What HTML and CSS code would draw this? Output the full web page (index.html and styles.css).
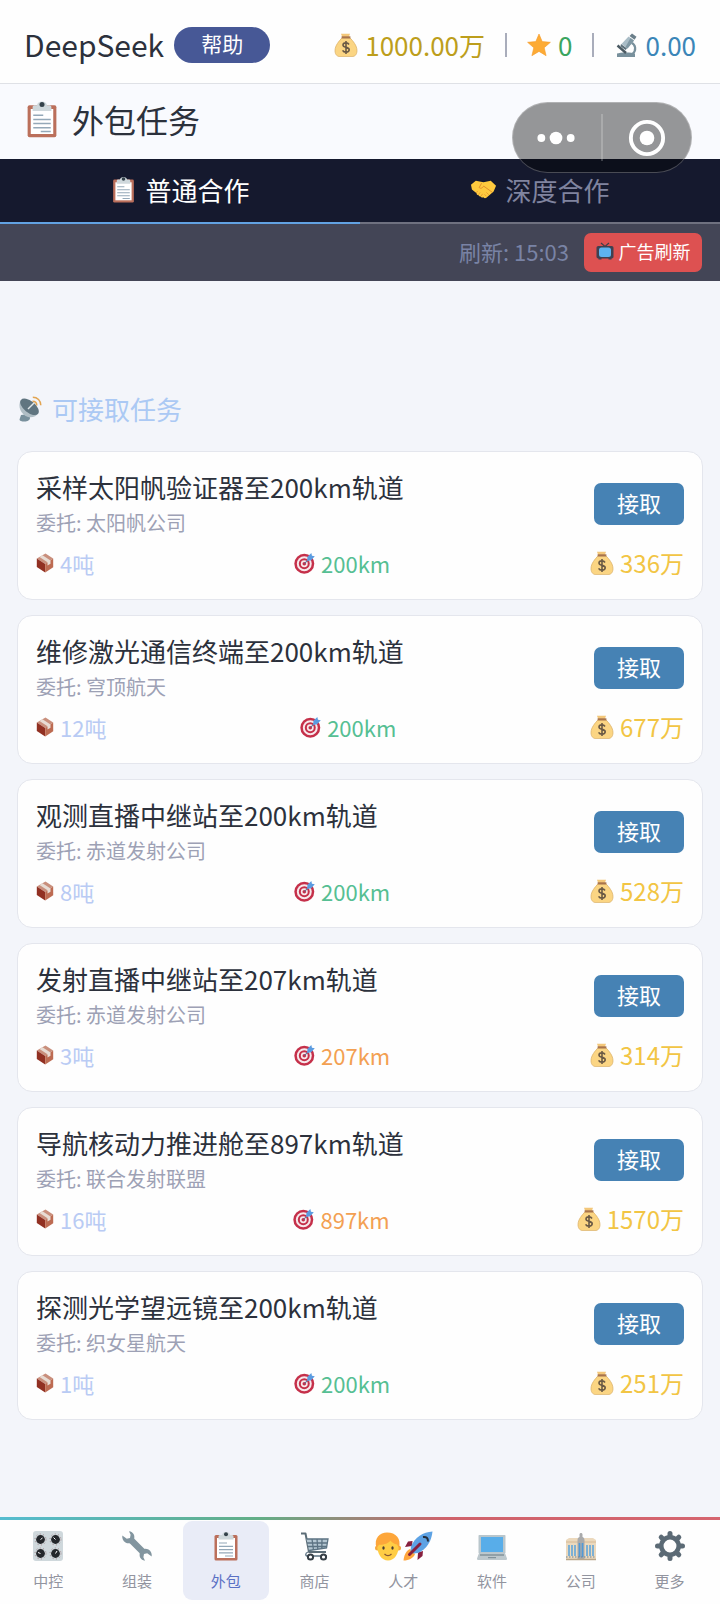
FILE: index.html
```html
<!DOCTYPE html>
<html lang="zh-CN">
<head>
    <meta charset="UTF-8">
    <meta name="viewport" content="width=device-width, initial-scale=1.0">
    <title>外包任务</title>
    <link rel="stylesheet" href="styles.css">
</head>
<body>
    <!-- icons -->
    <svg class="sprite" aria-hidden="true">
        <symbol id="i-money" viewBox="0 0 24 24">
            <path d="M7 .8h9l-1.6 4.4H8.6z" fill="#f3c77a"/>
            <path d="M8.3 4.6C5 8 1 12.600 1 17.600 1 22 3.500 23.600 6 23.600h12c2.500 0 5-1.600 5-6 0-5-4-9.600-7.300-13z" fill="#fbd583" stroke="#d9ae63" stroke-width=".7"/>
            <path d="M7.600 3.300h8.800v2.200H7.600z" fill="#a8744c"/>
            <path d="M15 11.500c-.7-1.200-1.800-1.600-3.100-1.600-1.700 0-2.900.8-2.900 2.200 0 3.300 6.200 1.300 6.200 4.700 0 1.500-1.300 2.300-3.200 2.300-1.500 0-2.700-.5-3.400-1.800M12 8v13" fill="none" stroke="#6b5a45" stroke-width="1.600"/>
        </symbol>
        <symbol id="i-star" viewBox="0 0 24 24">
            <path d="M12 1l3.200 7.600 8.200.7-6.200 5.400 1.900 8-7.100-4.300-7.100 4.300 1.900-8L.6 9.300l8.200-.7z" fill="#fdab35" stroke="#f59a28" stroke-width=".6" stroke-linejoin="round"/>
        </symbol>
        <symbol id="i-scope" viewBox="0 0 24 24">
            <path d="M17 9.500c5 2 5.500 8 1.500 11.500" fill="none" stroke="#78909c" stroke-width="2.200"/>
            <path d="M3 20.500c3-1.500 15-1.500 18 0V24H3z" fill="#78909c"/>
            <path d="M3.500 12.500l8.500 7.500" stroke="#4a5962" stroke-width="2.400"/>
            <path d="M14.500 3.500l5.500 4-6.500 8-6-4.500z" fill="#a9bcc6"/>
            <path d="M16.500 5l3.500 2.500-6.500 8-2-1.500z" fill="#7f97a3"/>
            <path d="M18 .5l4.500 3.200-2 3-5-3.600z" fill="#6b7f8a"/>
            <path d="M7 11l6 4.500-1.500 1.500-5-3.700z" fill="#5b6f7a"/>
        </symbol>
        <symbol id="i-board" viewBox="0 0 24 30">
            <rect x=".5" y="4" width="23" height="25.500" rx="1.500" fill="#bb6f5b"/>
            <path d="M3 7h18v20H3z" fill="#fff"/>
            <path d="M4.500 8.500V5.500c0-1 .8-1.500 2-1.500H8c.5-2 1.800-3 4-3s3.500 1 4 3h1.500c1.200 0 2 .5 2 1.500v3z" fill="#cfd8dc"/>
            <circle cx="12" cy="3.300" r="2" fill="#34424b"/>
            <path d="M5 12h8M5 15.300h14M5 18.600h14M5 21.900h14M11 25h8" stroke="#94a8b8" stroke-width="1.200"/>
        </symbol>
        <symbol id="i-hands" viewBox="0 0 28 20">
            <path d="M1 5l5-4 8 1.500L21.500 1 27 6l-2.500 6-7.500 6.500c-1.200.9-2.500.5-3-.5-1.300.8-2.500.2-2.800-.8-1.200.4-2.300-.3-2.400-1.400-1.300.1-2-.8-2-1.900L2 10z" fill="#ffca3e"/>
            <path d="M12 3.500L9.500 8c1.500 1.500 3.500.5 4.700-1.500l8.800 6.300" fill="none" stroke="#e08c2c" stroke-width="1"/>
            <path d="M8 11.500l-1.500 2M10.500 13l-1.700 2.500M13 14.500l-1.500 2.500M15 15l2 2M17 13l2.500 2.500" stroke="#e89a2e" stroke-width=".9"/>
        </symbol>
        <symbol id="i-tv" viewBox="0 0 18 18">
            <path d="M5 1l4 3.500L13 1" fill="none" stroke="#3d3f4a" stroke-width="1.200"/>
            <rect x=".5" y="4" width="17" height="12.500" rx="1.800" fill="#3f4150"/>
            <path d="M2.500 16h3v1.500h-3zM12.500 16h3v1.500h-3z" fill="#3f4150"/>
            <rect x="3" y="5.500" width="12" height="9.500" rx="2.500" fill="#5db3f0"/>
        </symbol>
        <symbol id="i-dish" viewBox="0 0 24 26">
            <path d="M3 19l8-1 1 4c0 2-2.500 3.500-5.500 3.500S1.500 25 1.500 23.500z" fill="#78909c"/>
            <path d="M3 4c-4 6 0 15 7 17 4 1 8.500-.5 10.500-4z" fill="#b0bec5"/>
            <ellipse cx="11.500" cy="10.800" rx="11" ry="5.800" transform="rotate(39 11.500 10.800)" fill="#607580"/>
            <path d="M10 13l6-6" stroke="#dfe7ea" stroke-width="1.500"/>
            <path d="M14.500 5.200c2.500 0 4.300 1.800 4.300 4.300M14.800 1.200c4.600 0 8 3.400 8 8" fill="none" stroke="#e2a552" stroke-width="1.500"/>
        </symbol>
        <symbol id="i-box" viewBox="0 0 18 20">
            <path d="M.800 5.500L9.500.5l7.700 5-8 5.500z" fill="#c98f7c"/>
            <path d="M.800 5.500L9.200 11v8.500L.800 14z" fill="#913022"/>
            <path d="M17.200 5.500L9.200 11v8.500l8-5.200z" fill="#bd6b52"/>
            <path d="M3.500 3.900l3-1.700 8 5.200v3.300l-3 1.700V9.200z" fill="#e8dcd4"/>
        </symbol>
        <symbol id="i-target" viewBox="0 0 20 20">
            <circle cx="9.800" cy="10.200" r="9.500" fill="#c5304a"/>
            <circle cx="9.800" cy="10.200" r="7.100" fill="#f7e9ec"/>
            <circle cx="9.800" cy="10.200" r="5.200" fill="#c5304a"/>
            <circle cx="9.800" cy="10.200" r="3.300" fill="#f7e9ec"/>
            <circle cx="9.800" cy="10.200" r="1.700" fill="#c5304a"/>
            <path d="M10 10l5-5" stroke="#4c6f9c" stroke-width="1"/>
            <path d="M12.500 7.500l.3-4L16.500 0l.6 2.600 2.700.5-3.500 3.900z" fill="#5b9be0"/>
        </symbol>
        <symbol id="i-knobs" viewBox="0 0 30 30">
            <rect width="30" height="30" rx="3" fill="#cfd8dc"/>
            <g fill="none" stroke="#9e7f83" stroke-width="1" stroke-dasharray="1 2.500"><circle cx="7.500" cy="8.500" r="5.500"/><circle cx="22.500" cy="8.500" r="5.500"/><circle cx="7.500" cy="22.500" r="5.500"/><circle cx="22.500" cy="22.500" r="5.500"/></g>
            <g fill="#24272b"><circle cx="7.500" cy="8.500" r="4.400"/><circle cx="22.500" cy="8.500" r="4.400"/><circle cx="7.500" cy="22.500" r="4.400"/><circle cx="22.500" cy="22.500" r="4.400"/></g>
            <path d="M7.500 8.500l2-1.500M22.500 8.500l-2-2M7.500 22.500L5 21.500M22.500 22.500l1.500-2.500" stroke="#fff" stroke-width="1"/>
        </symbol>
        <symbol id="i-wrench" viewBox="0 0 30 30">
            <path d="M8.500 8.500l13 13" stroke="#82959f" stroke-width="6.500"/>
            <path d="M7 .300C11.500.8 13.500 5 11.800 9c-1.300 3.200-5.300 4.300-8.300 2.500C1 10 0 7.500.3 4.500l4.500 3.300L8 7l.6-3.200zM23 29.700c-4.500-.5-6.500-4.700-4.800-8.700 1.300-3.200 5.300-4.300 8.300-2.500 2.500 1.500 3.500 4 3.200 7l-4.500-3.300-3.200.8-.6 3.200z" fill="#82959f"/>
        </symbol>
        <symbol id="i-cart" viewBox="0 0 30 30">
            <path d="M1 2.500h4.500L9 21h17" fill="none" stroke="#5c6d77" stroke-width="2" stroke-linejoin="round"/>
            <path d="M6.500 8H28l-1.500 9L9 19.500z" fill="#b5c7d2"/>
            <path d="M6.500 8H28l-1.500 9L9 19.500M7 12h20M8 15.500h19M12 8l1.500 11M17 8l.8 10.500M22 8l-.2 10M8 21c-3 1-3 4 0 4h19" fill="none" stroke="#5c7383" stroke-width="1.300"/>
            <circle cx="10.500" cy="26" r="2.600" fill="#fff" stroke="#353e45" stroke-width="2"/><circle cx="23.500" cy="26" r="2.600" fill="#fff" stroke="#353e45" stroke-width="2"/>
        </symbol>
        <symbol id="i-person" viewBox="0 0 28 30">
            <circle cx="3.500" cy="17" r="2.500" fill="#f6a93c"/><circle cx="24.500" cy="17" r="2.500" fill="#f6a93c"/>
            <path d="M3 13c0 10 4.500 16.500 11 16.500S25 23 25 13c0-6-4-9-11-9S3 7 3 13z" fill="#ffcd45"/>
            <path d="M2.500 17C-.5 7 6 1.500 13 1.500c9 0 14.500 6 12 15.500l-2-3.500c-3-.5-5-2-6.500-4-2 3-7 4.500-11.500 4.200z" fill="#fda63a"/>
            <ellipse cx="9.500" cy="17" rx="1.200" ry="1.700" fill="#493d33"/><ellipse cx="18.500" cy="17" rx="1.200" ry="1.700" fill="#493d33"/>
            <path d="M10.500 23c2 2 5 2 7 0" fill="none" stroke="#8a5a33" stroke-width="1.300"/>
        </symbol>
        <symbol id="i-rocket" viewBox="0 0 30 30">
            <path d="M7 18c-4 2-6 6-6.500 11.500C6 29.500 10.500 27 12 23z" fill="#ffa63d"/>
            <path d="M9.500 10L5 10.500 2 16l7-1zM20 20l-.5 5-5 4 .5-7.500z" fill="#87203f"/>
            <path d="M29.500.5C20 1 12 6 8 15.500L7.500 20l3 2.500 4.500-.5C24 18 28.500 10 29.500.5z" fill="#5da2e4"/>
            <path d="M17 13L6.500 23.500" stroke="#87203f" stroke-width="3" stroke-linecap="round"/>
            <path d="M20 6c3.500-.5 5 1 5 4.500" fill="none" stroke="#252d3a" stroke-width="2"/>
        </symbol>
        <symbol id="i-laptop" viewBox="0 0 30 30">
            <path d="M2.500 4h25c.6 0 1 .4 1 1v17h-27V5c0-.6.400-1 1-1z" fill="#b9c6cc"/>
            <path d="M4 6h22v15H4z" fill="#58ade9"/>
            <path d="M2 22h26l2 5.500c0 1-.5 1.500-1.500 1.500h-27C.5 29 0 28.500 0 27.500z" fill="#bdc8cd"/>
            <path d="M3 24h24M11 26.700h8" stroke="#82929b" stroke-width="1.300"/>
        </symbol>
        <symbol id="i-bank" viewBox="0 0 30 30">
            <path d="M0 9l3-2h24l3 2v20H0z" fill="#ecd9bd"/>
            <path d="M0 11h30" stroke="#d4b996" stroke-width="1"/>
            <path d="M3 14v11M6 14v11M9 14v11M21 14v11M24 14v11M27 14v11" stroke="#58a2dc" stroke-width="1.500"/>
            <path d="M11.500 9c0-2 1.500-3 2-3V3.500c0-2 3-2 3 0V6c.5 0 2 1 2 3v20h-7z" fill="#a9aaab"/>
            <path d="M13.500 12v14M16.500 12v14" stroke="#4f9ad8" stroke-width="1.600"/>
            <path d="M0 26h30" stroke="#6c8394" stroke-width="1" stroke-dasharray="1.500 1.500"/>
            <path d="M0 28.500h30" stroke="#b8a68b" stroke-width="1.500"/>
        </symbol>
        <symbol id="i-gear" viewBox="0 0 30 30">
            <circle cx="15" cy="15" r="8.700" fill="none" stroke="#5b6a75" stroke-width="4.500"/>
            <path d="M15 2.500v3M15 24.500v3M2.500 15h3M24.500 15h3M6.200 6.200l2 2M21.800 21.800l2 2M6.200 23.800l2-2M21.800 8.200l2-2" stroke="#5b6a75" stroke-width="5" stroke-linecap="round"/>
        </symbol>
    </svg>

    <header class="topbar">
        <div class="brand">
            <span class="brand-name">DeepSeek</span>
            <button class="btn-help" type="button">帮助</button>
        </div>
        <div class="stats">
            <span class="stat gold"><svg><use href="#i-money"/></svg>1000.00万</span>
            <span class="stat green"><svg><use href="#i-star"/></svg>0</span>
            <span class="stat blue"><svg><use href="#i-scope"/></svg>0.00</span>
        </div>
    </header>

    <div class="page-title">
        <svg><use href="#i-board"/></svg>
        <h1>外包任务</h1>
    </div>

    <div class="capsule">
        <button type="button" aria-label="菜单">
            <svg viewBox="0 0 90 70"><circle cx="29" cy="35" r="4"/><circle cx="44" cy="35" r="6.500"/><circle cx="59" cy="35" r="4"/></svg>
        </button>
        <button type="button" aria-label="关闭">
            <svg viewBox="0 0 90 70"><circle cx="45" cy="35" r="16.500" fill="none" stroke="#fff" stroke-width="4"/><circle cx="45" cy="35" r="7.500"/></svg>
        </button>
    </div>

    <div class="tabs">
        <button class="tab active" type="button"><svg class="i-tab"><use href="#i-board"/></svg>普通合作</button>
        <button class="tab" type="button"><svg class="i-tab"><use href="#i-hands"/></svg>深度合作</button>
    </div>

    <div class="refresh">
        <span class="refresh-time">刷新: 15:03</span>
        <button class="btn-ad" type="button"><svg><use href="#i-tv"/></svg>广告刷新</button>
    </div>

    <main class="contents">
        <h2 class="section-title"><svg><use href="#i-dish"/></svg>可接取任务</h2>

        <div class="task-list">
            <div class="task">
                <div class="task-head">
                    <div>
                        <h3 class="name">采样太阳帆验证器至200km轨道</h3>
                        <p class="client">委托: 太阳帆公司</p>
                    </div>
                    <button class="btn-take" type="button">接取</button>
                </div>
                <div class="task-info">
                    <span class="weight"><svg><use href="#i-box"/></svg>4吨</span>
                    <span class="orbit"><svg><use href="#i-target"/></svg>200km</span>
                    <span class="reward"><svg><use href="#i-money"/></svg>336万</span>
                </div>
            </div>

            <div class="task">
                <div class="task-head">
                    <div>
                        <h3 class="name">维修激光通信终端至200km轨道</h3>
                        <p class="client">委托: 穹顶航天</p>
                    </div>
                    <button class="btn-take" type="button">接取</button>
                </div>
                <div class="task-info">
                    <span class="weight"><svg><use href="#i-box"/></svg>12吨</span>
                    <span class="orbit"><svg><use href="#i-target"/></svg>200km</span>
                    <span class="reward"><svg><use href="#i-money"/></svg>677万</span>
                </div>
            </div>

            <div class="task">
                <div class="task-head">
                    <div>
                        <h3 class="name">观测直播中继站至200km轨道</h3>
                        <p class="client">委托: 赤道发射公司</p>
                    </div>
                    <button class="btn-take" type="button">接取</button>
                </div>
                <div class="task-info">
                    <span class="weight"><svg><use href="#i-box"/></svg>8吨</span>
                    <span class="orbit"><svg><use href="#i-target"/></svg>200km</span>
                    <span class="reward"><svg><use href="#i-money"/></svg>528万</span>
                </div>
            </div>

            <div class="task">
                <div class="task-head">
                    <div>
                        <h3 class="name">发射直播中继站至207km轨道</h3>
                        <p class="client">委托: 赤道发射公司</p>
                    </div>
                    <button class="btn-take" type="button">接取</button>
                </div>
                <div class="task-info">
                    <span class="weight"><svg><use href="#i-box"/></svg>3吨</span>
                    <span class="orbit high"><svg><use href="#i-target"/></svg>207km</span>
                    <span class="reward"><svg><use href="#i-money"/></svg>314万</span>
                </div>
            </div>

            <div class="task">
                <div class="task-head">
                    <div>
                        <h3 class="name">导航核动力推进舱至897km轨道</h3>
                        <p class="client">委托: 联合发射联盟</p>
                    </div>
                    <button class="btn-take" type="button">接取</button>
                </div>
                <div class="task-info">
                    <span class="weight"><svg><use href="#i-box"/></svg>16吨</span>
                    <span class="orbit high"><svg><use href="#i-target"/></svg>897km</span>
                    <span class="reward"><svg><use href="#i-money"/></svg>1570万</span>
                </div>
            </div>

            <div class="task">
                <div class="task-head">
                    <div>
                        <h3 class="name">探测光学望远镜至200km轨道</h3>
                        <p class="client">委托: 织女星航天</p>
                    </div>
                    <button class="btn-take" type="button">接取</button>
                </div>
                <div class="task-info">
                    <span class="weight"><svg><use href="#i-box"/></svg>1吨</span>
                    <span class="orbit"><svg><use href="#i-target"/></svg>200km</span>
                    <span class="reward"><svg><use href="#i-money"/></svg>251万</span>
                </div>
            </div>
        </div>
    </main>

    <nav class="bottom-nav">
        <a href="#"><span class="icons"><svg><use href="#i-knobs"/></svg></span>中控</a>
        <a href="#"><span class="icons"><svg><use href="#i-wrench"/></svg></span>组装</a>
        <a href="#" class="active"><span class="icons"><svg><use href="#i-board"/></svg></span>外包</a>
        <a href="#"><span class="icons"><svg><use href="#i-cart"/></svg></span>商店</a>
        <a href="#"><span class="icons"><svg><use href="#i-person"/></svg><svg><use href="#i-rocket"/></svg></span>人才</a>
        <a href="#"><span class="icons"><svg><use href="#i-laptop"/></svg></span>软件</a>
        <a href="#"><span class="icons"><svg><use href="#i-bank"/></svg></span>公司</a>
        <a href="#"><span class="icons"><svg><use href="#i-gear"/></svg></span>更多</a>
    </nav>
</body>
</html>
```

FILE: styles.css
```css
*{
    box-sizing: border-box;
    margin: 0;
    padding: 0;
}

body{
    display: flex;
    flex-direction: column;
    position: relative;
    min-height: 100vh;
    background: #f3f5fa;
    color: #2c313c;
    font-family: "Noto Sans CJK SC", sans-serif;
}

button{
    padding-bottom: 3px;
    border: none;
    font-family: inherit;
    cursor: pointer;
}

h1, h2, h3{
    font-weight: 400;
}

svg{
    flex: none;
}

.sprite{
    position: absolute;
    width: 0;
    height: 0;
}

/* top */
.topbar{
    display: flex;
    justify-content: space-between;
    align-items: center;
    padding: 27px 24px 20px;
    background: #fefefe;
    border-bottom: 1px solid #dfe1e6;
}

.brand{
    display: flex;
    align-items: center;
    gap: 10px;
}

.brand-name{
    font-size: 30px;
    line-height: 32px;
    padding-bottom: 3px;
}

.btn-help{
    width: 96px;
    height: 36px;
    border-radius: 18px;
    background: #475896;
    color: #fff;
    font-size: 21px;
    line-height: 33px;
}

.stats{
    display: flex;
    align-items: center;
}

.stat{
    display: flex;
    align-items: center;
    gap: 7px;
    font-size: 26px;
    line-height: 24px;
}

.stat + .stat{
    margin-left: 20px;
    padding-left: 20px;
    border-left: 2px solid #a9adbb;
}

.stat svg{
    width: 24px;
    height: 24px;
}

.gold{ color: #bd9e1c; }
.green{ color: #3ba55f; }
.blue{ color: #3b86b8; }

.page-title{
    display: flex;
    align-items: center;
    gap: 15px;
    height: 75px;
    padding: 0 27px 5px;
    background: #f9fafe;
}

.page-title svg{
    width: 30px;
    height: 38px;
}

.page-title h1{
    font-size: 32px;
    line-height: 40px;
}

/* floats over the title row and the tabs */
.capsule{
    position: absolute;
    top: 102px;
    right: 28px;
    display: flex;
    align-items: center;
    width: 180px;
    height: 71px;
    border: 1px solid rgba(255,255,255,.25);
    border-radius: 36px;
    background: rgba(0,0,0,.4);
}

.capsule button{
    flex: 1;
    height: 47px;
    display: flex;
    align-items: center;
    padding: 0;
    background: none;
}

.capsule button + button{
    border-left: 2px solid rgba(255,255,255,.2);
}

.capsule svg{
    width: 100%;
    height: 70px;
    fill: #fff;
}

.tabs{
    display: flex;
    background: #15192e;
}

.tab{
    flex: 1;
    display: flex;
    justify-content: center;
    align-items: center;
    gap: 8px;
    height: 65px;
    background: none;
    border-bottom: 2px solid #6f7180;
    color: #80849f;
    font-size: 26px;
}

.tab.active{
    border-bottom-color: #62a2e2;
    color: #fff;
}

.i-tab{
    width: 27px;
    height: 27px;
}

.refresh{
    display: flex;
    justify-content: flex-end;
    align-items: center;
    gap: 15px;
    padding: 9px 18px;
    background: #434556;
}

.refresh-time{
    padding-bottom: 3px;
    color: #7983a5;
    font-size: 22px;
    line-height: 32px;
}

.btn-ad{
    display: flex;
    justify-content: center;
    align-items: center;
    gap: 5px;
    width: 118px;
    height: 39px;
    border-radius: 7px;
    background: #dd5151;
    color: #fff;
    font-size: 18px;
}

.btn-ad svg{
    width: 18px;
    height: 18px;
}

/* tasks */
.contents{
    flex: 1;
    padding: 107px 17px 24px;
}

.section-title{
    display: flex;
    align-items: center;
    gap: 9px;
    margin-bottom: 21px;
    color: #abc9f4;
    font-size: 26px;
    line-height: 42px;
}

.section-title svg{
    width: 26px;
    height: 26px;
}

.task-list{
    display: flex;
    flex-direction: column;
    gap: 15px;
}

.task{
    padding: 16px 18px 20px;
    background: #fefefe;
    border: 1px solid #e4e6ed;
    border-radius: 15px;
}

.task-head{
    display: flex;
    justify-content: space-between;
    align-items: center;
    margin-bottom: 8px;
}

.name{
    font-size: 26px;
    line-height: 38px;
}

.client{
    color: #9da1b5;
    font-size: 20px;
    line-height: 33px;
}

.btn-take{
    width: 90px;
    height: 42px;
    border-radius: 7px;
    background: #4682b4;
    color: #fff;
    font-size: 22px;
}

.task-info{
    display: flex;
    justify-content: space-between;
    align-items: center;
    line-height: 32px;
}

.task-info span{
    display: flex;
    align-items: center;
}

.weight, .orbit{
    gap: 6px;
    font-size: 22px;
}

.weight{ color: #b9cbf4; }
.orbit{ color: #56bf93; }
.orbit.high{ color: #f3a052; }

.weight svg{
    width: 18px;
    height: 20px;
}

.orbit svg{
    width: 21px;
    height: 21px;
}

.reward{
    gap: 6px;
    color: #f2c544;
    font-size: 24px;
}

.reward svg{
    width: 24px;
    height: 24px;
}

/* bottom */
.bottom-nav{
    position: sticky;
    bottom: 0;
    display: flex;
    padding: 1px 6px 4px 4px;
    border-top: 3px solid;
    border-image: linear-gradient(to right, #55bcd0, #62ae86 36%, #cf626b 62%, #d5656f) 1;
    background: #fefefe;
}

.bottom-nav a{
    flex: 1;
    display: flex;
    flex-direction: column;
    align-items: center;
    gap: 8px;
    height: 79px;
    margin: 0 1px;
    padding-top: 10px;
    border-radius: 9px;
    color: #92949f;
    font-size: 15px;
    line-height: 24px;
    text-decoration: none;
}

.bottom-nav a.active{
    background: #e9ecf7;
    color: #5a70c4;
}

.icons{
    display: flex;
    justify-content: center;
    height: 30px;
}

.icons svg{
    width: 30px;
    height: 30px;
}
```
